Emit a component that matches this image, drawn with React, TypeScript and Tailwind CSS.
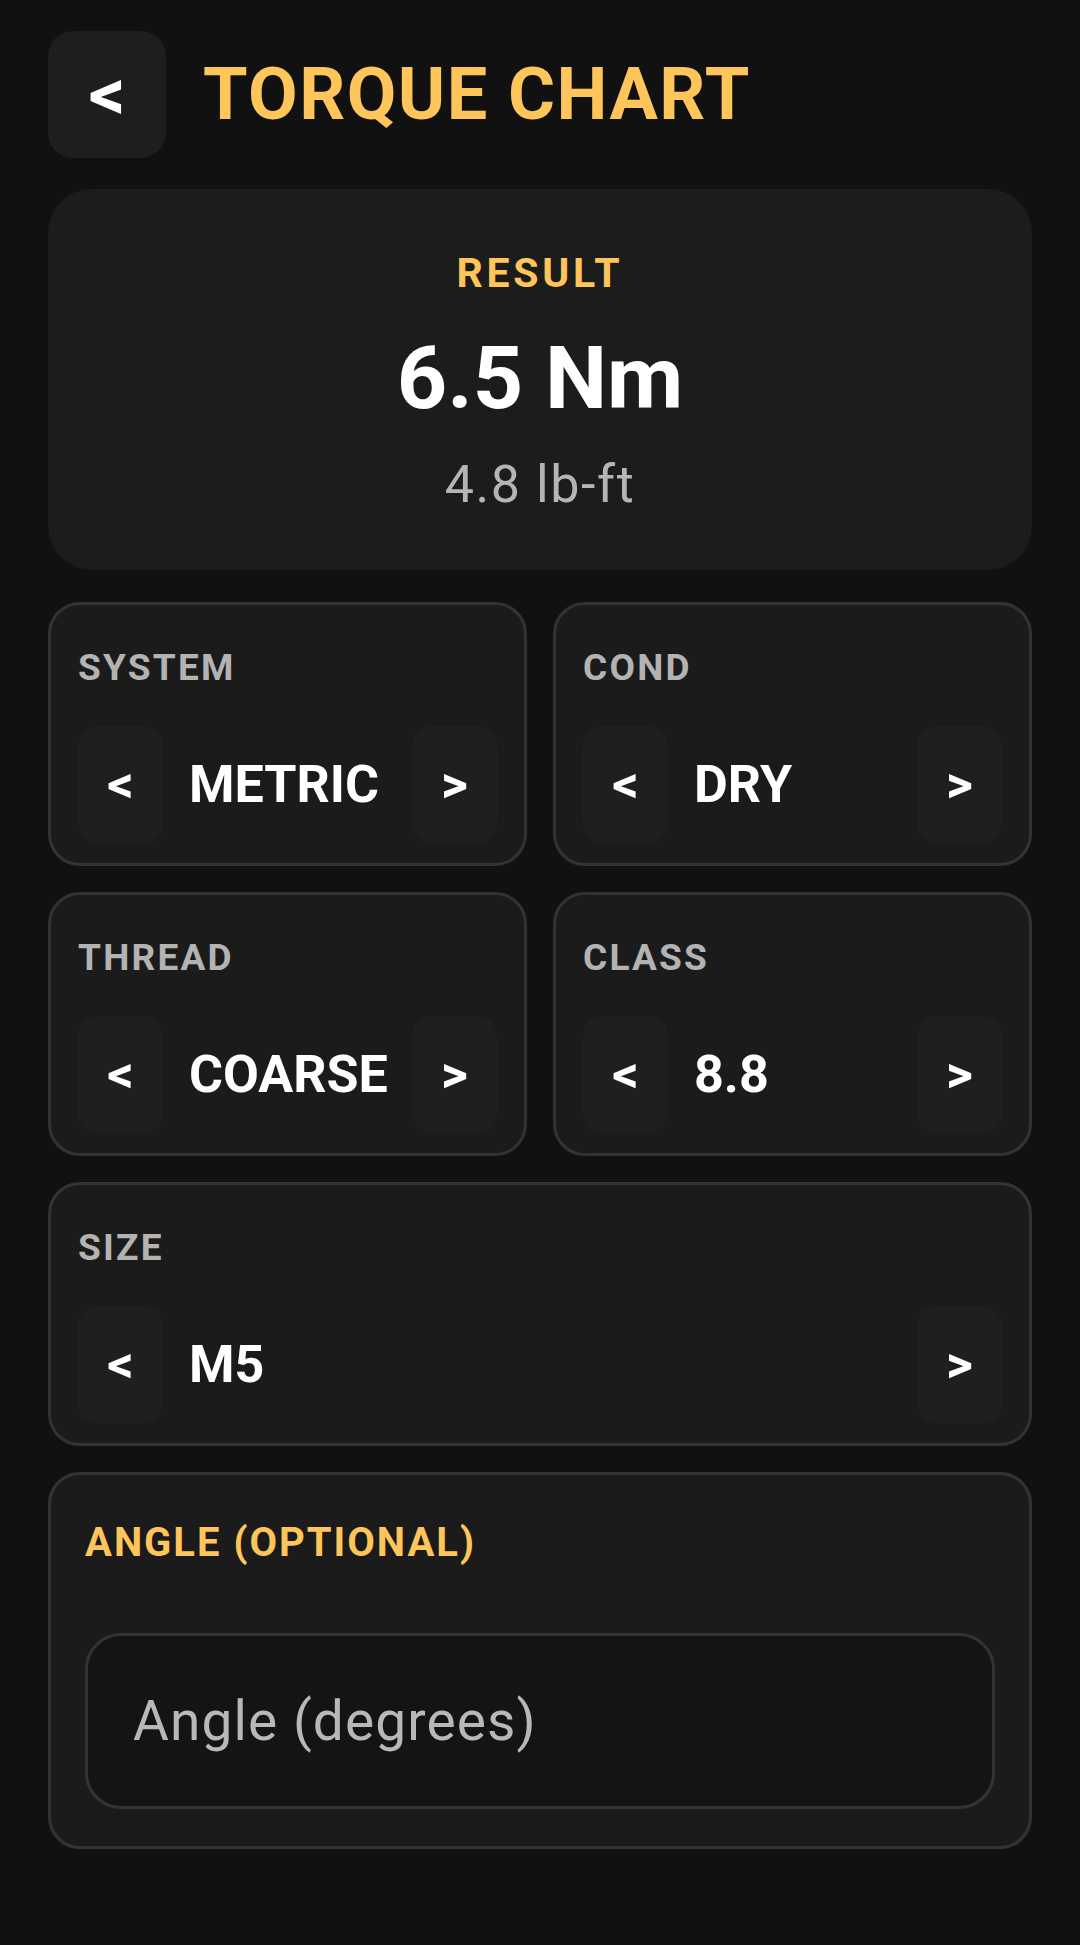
import React from "react";

function Selector({ label, value }: { label: string; value: string }) {
  return (
    <div className="rounded-[32px] border-[3px] border-[#333333] bg-[#1b1b1b] px-[27px] pt-[44px] pb-[20px]">
      <div className="text-[37px] font-bold leading-none tracking-[0.06em] text-[#b3b3b3]">{label}</div>
      <div className="mt-[40px] flex h-[117px] items-center">
        <button className="flex h-[117px] w-[85px] items-center justify-center rounded-[20px] bg-[#1f1f1f] text-[52px] font-bold leading-none text-white">
          &lt;
        </button>
        <div className="ml-[26px] flex-1 text-[52px] font-bold leading-none text-white">{value}</div>
        <button className="flex h-[117px] w-[85px] items-center justify-center rounded-[20px] bg-[#1f1f1f] text-[52px] font-bold leading-none text-white">
          &gt;
        </button>
      </div>
    </div>
  );
}

export default function App() {
  return (
    <div
      className="min-h-[1945px] bg-[#111111] px-12 pt-[31px]"
      style={{ fontFamily: "Roboto, 'Noto Sans', sans-serif" }}
    >
      <div className="flex items-center gap-[37px]">
        <button className="flex h-[127px] w-[118px] items-center justify-center rounded-[25px] bg-[#1e1e1e] text-[72px] font-bold leading-none text-white">
          &lt;
        </button>
        <h1 className="text-[72px] font-bold leading-none tracking-[0.02em] text-[#fec55a]">TORQUE CHART</h1>
      </div>

      <div className="mt-[31px] rounded-[44px] bg-[#1c1c1c] pt-[64px] pb-[59px] text-center">
        <div className="text-[41px] font-bold leading-none tracking-[0.09em] text-[#fec55a]">RESULT</div>
        <div className="mt-[40px] text-[88px] font-bold leading-none text-white">6.5 Nm</div>
        <div className="mt-[37px] text-[52px] leading-none tracking-[0.03em] text-[#b5b5b5]">4.8 lb-ft</div>
      </div>

      <div className="mt-[32px] flex flex-col gap-[26px]">
        <div className="grid grid-cols-2 gap-[26px]">
          <Selector label="SYSTEM" value="METRIC" />
          <Selector label="COND" value="DRY" />
        </div>
        <div className="grid grid-cols-2 gap-[26px]">
          <Selector label="THREAD" value="COARSE" />
          <Selector label="CLASS" value="8.8" />
        </div>
        <Selector label="SIZE" value="M5" />

        <div className="rounded-[32px] border-[3px] border-[#333333] bg-[#1b1b1b] px-[34px] pt-[48px] pb-[37px]">
          <div className="text-[40px] font-bold leading-none tracking-[0.05em] text-[#fec55a]">ANGLE (OPTIONAL)</div>
          <input
            type="text"
            placeholder="Angle (degrees)"
            className="mt-[70px] block h-[176px] w-full rounded-[36px] border-[3px] border-[#333333] bg-[#141414] pl-[45px] text-[55px] tracking-[0.02em] text-white outline-none placeholder:text-[#b8b8b8]"
          />
        </div>
      </div>
    </div>
  );
}
